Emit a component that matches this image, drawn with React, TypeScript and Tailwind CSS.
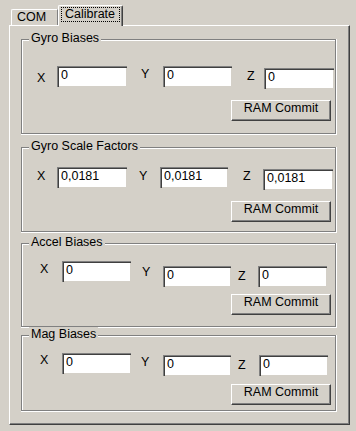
import React from 'react';

type Item = { label: string; cell: string; field: string };
type Group = { title: string; value: string; box: string; inner: string; btn: string; items: Item[] };

const groups: Group[] = [
  {
    title: 'Gyro Biases',
    value: '0',
    box: 'mt-[13px]',
    inner: 'h-[95px]',
    btn: 'mt-[11px]',
    items: [
      { label: 'X', cell: 'w-[35px] pl-[15px] mt-[31px]', field: 'w-[70px] mt-[26px]' },
      { label: 'Y', cell: 'w-[36px] pl-[14px] mt-[27px]', field: 'w-[69px] mt-[26px]' },
      { label: 'Z', cell: 'w-[32px] pl-[15px] mt-[29px]', field: 'w-[70px] mt-[28px]' },
    ],
  },
  {
    title: 'Gyro Scale Factors',
    value: '0,0181',
    box: 'mt-[12px]',
    inner: 'h-[85px]',
    btn: 'mt-[11px]',
    items: [
      { label: 'X', cell: 'w-[35px] pl-[15px] mt-[21px]', field: 'w-[70px] mt-[19px]' },
      { label: 'Y', cell: 'w-[33px] pl-[12px] mt-[21px]', field: 'w-[68px] mt-[19px]' },
      { label: 'Z', cell: 'w-[35px] pl-[15px] mt-[21px]', field: 'w-[70px] mt-[21px]' },
    ],
  },
  {
    title: 'Accel Biases',
    value: '0',
    box: 'mt-[10px]',
    inner: 'h-[84px]',
    btn: 'mt-[7px]',
    items: [
      { label: 'X', cell: 'w-[40px] pl-[18px] mt-[18px]', field: 'w-[69px] mt-[17px]' },
      { label: 'Y', cell: 'w-[32px] pl-[11px] mt-[21px]', field: 'w-[68px] mt-[22px]' },
      { label: 'Z', cell: 'w-[27px] pl-[7px] mt-[25px]', field: 'w-[69px] mt-[22px]' },
    ],
  },
  {
    title: 'Mag Biases',
    value: '0',
    box: 'mt-[7px]',
    inner: 'h-[76px]',
    btn: 'mt-[8px]',
    items: [
      { label: 'X', cell: 'w-[40px] pl-[18px] mt-[17px]', field: 'w-[69px] mt-[17px]' },
      { label: 'Y', cell: 'w-[32px] pl-[10px] mt-[19px]', field: 'w-[68px] mt-[19px]' },
      { label: 'Z', cell: 'w-[28px] pl-[7px] mt-[22px]', field: 'w-[69px] mt-[19px]' },
    ],
  },
];

const GroupBox: React.FC<{ group: Group }> = ({ group }) => (
  <div className={`ml-[11px] w-[316px] border-r border-b border-white ${group.box}`}>
    <div className={`relative w-[315px] border border-[#808080] shadow-[inset_1px_1px_0_#ffffff] ${group.inner}`}>
      <span className="absolute left-[7px] top-[-9px] px-[2px] bg-[#d4d0c8] leading-[15px] whitespace-nowrap">
        {group.title}
      </span>
      <div className="flex items-start">
        {group.items.map((it) => (
          <React.Fragment key={it.label}>
            <div className={`leading-[15px] ${it.cell}`}>{it.label}</div>
            <input
              readOnly
              value={group.value}
              className={`h-[21px] pl-[3px] pt-0 pb-[4px] bg-white text-black outline-none border-t border-l border-[#808080] border-r-white border-b-white shadow-[inset_1px_1px_0_#404040,inset_-1px_-1px_0_#d4d0c8] ${it.field}`}
            />
          </React.Fragment>
        ))}
      </div>
      <div
        className={`ml-[209px] w-[100px] h-[21px] text-center leading-[15px] pt-[0px] border-t border-l border-white border-r border-b border-r-[#404040] border-b-[#404040] shadow-[inset_-1px_-1px_0_#808080] ${group.btn}`}
      >
        RAM Commit
      </div>
    </div>
  </div>
);

const App: React.FC = () => {
  return (
    <div className="w-[356px] h-[431px] overflow-hidden bg-[#d4d0c8] pt-[5px] pl-[9px] text-black text-[12.5px] font-['Liberation_Sans',Arial,sans-serif]">
      <div className="flex items-end h-[20px]">
        <div className="ml-[2px] w-[47px] h-[16px] pl-[5px] leading-[14px] border-l border-t border-white border-r border-r-[#808080] rounded-tl-[2px]">
          COM
        </div>
        <div className="relative z-10 -mb-px w-[65px] h-[21px] bg-[#d4d0c8] border-l border-t border-white border-r border-r-[#404040] shadow-[inset_-1px_0_0_#808080] rounded-tl-[2px] rounded-tr-[2px]">
          <div className="ml-[2px] mt-[1px] w-[59px] h-[15px] px-[3px] leading-[13px] border border-dotted border-black">
            Calibrate
          </div>
        </div>
      </div>
      <div className="w-[341px] h-[400px] border-l border-t border-white border-r border-b border-r-[#404040] border-b-[#404040] shadow-[inset_-1px_-1px_0_#808080]">
        {groups.map((g) => (
          <GroupBox key={g.title} group={g} />
        ))}
      </div>
    </div>
  );
};

export default App;
